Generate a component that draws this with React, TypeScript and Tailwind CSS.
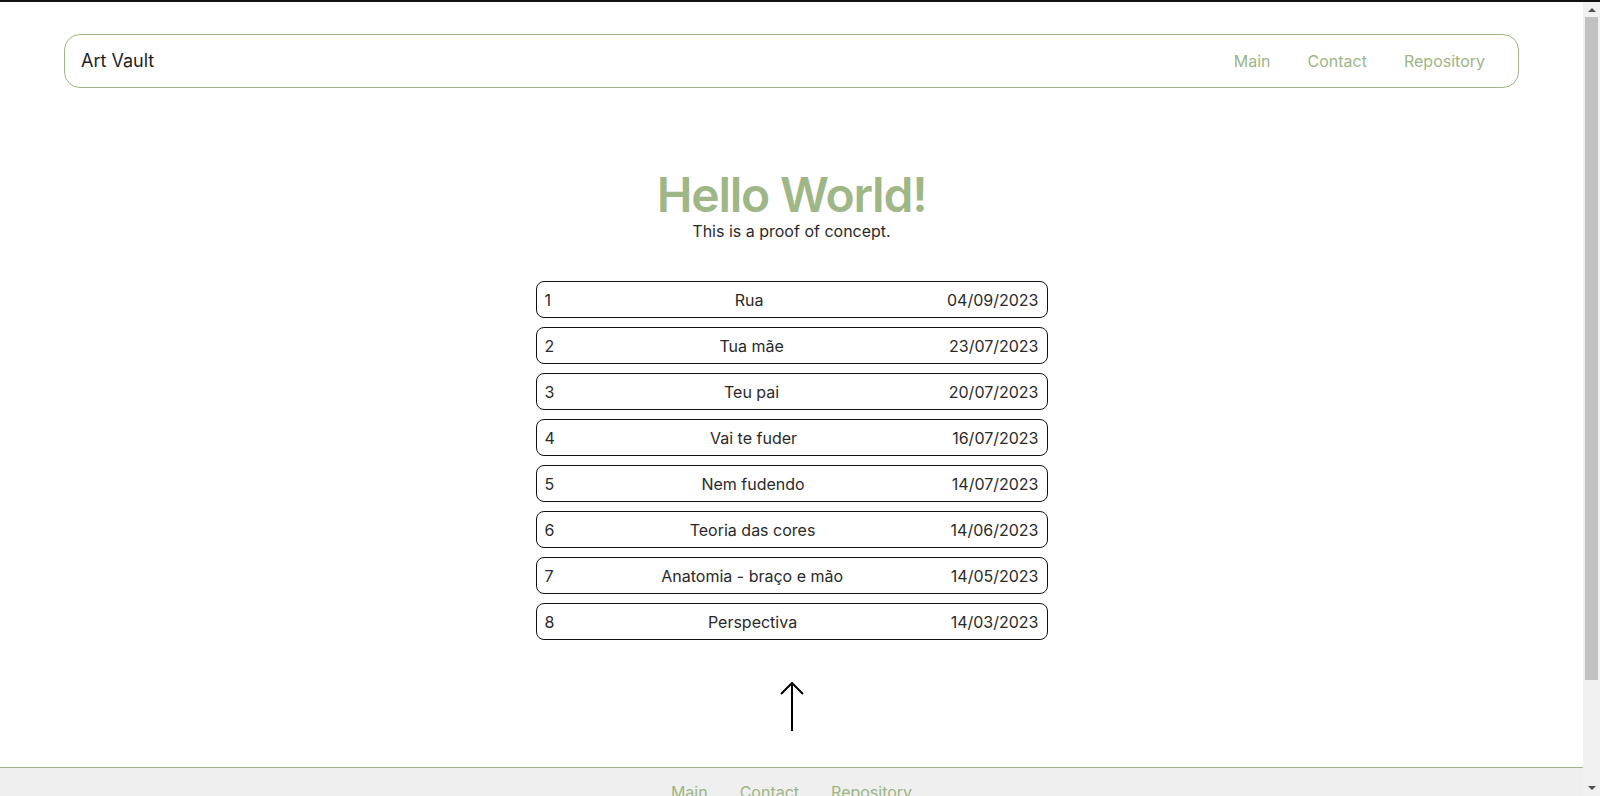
const ENTRIES = [
  { id: 1, title: "Rua", date: "04/09/2023" },
  { id: 2, title: "Tua mãe", date: "23/07/2023" },
  { id: 3, title: "Teu pai", date: "20/07/2023" },
  { id: 4, title: "Vai te fuder", date: "16/07/2023" },
  { id: 5, title: "Nem fudendo", date: "14/07/2023" },
  { id: 6, title: "Teoria das cores", date: "14/06/2023" },
  { id: 7, title: "Anatomia - braço e mão", date: "14/05/2023" },
  { id: 8, title: "Perspectiva", date: "14/03/2023" },
];

const LINKS = ["Main", "Contact", "Repository"];

function Scrollbar() {
  // classic browser scrollbar drawn over the right edge
  return (
    <div className="fixed right-0 top-[2px] flex h-[794px] w-[17px] flex-col bg-[#f1f1f1]">
      <div className="flex h-[15px] items-center justify-center">
        <div className="h-0 w-0 border-x-[4px] border-b-[4px] border-x-transparent border-b-[#505050]" />
      </div>
      <div className="mx-[2px] h-[663px] bg-[#c1c1c1]" />
      <div className="flex-1" />
      <div className="flex h-[17px] items-center justify-center">
        <div className="h-0 w-0 border-x-[4px] border-t-[4px] border-x-transparent border-t-[#505050]" />
      </div>
    </div>
  );
}

export default function App() {
  return (
    <div className="min-h-screen bg-white font-['Inter','Noto_Sans',sans-serif] text-[#222]">
      <div className="h-[2px] bg-[#111]" />

      <div className="mr-[17px]">
        {/* Header */}
        <header className="mx-16 mt-8 flex h-[54px] items-center justify-between rounded-2xl border border-[#9db585] pl-4 pr-[33px]">
          <span className="text-lg text-[#1f1f1f]">Art Vault</span>
          <nav className="flex gap-[37px]">
            {LINKS.map((l) => (
              <a key={l} href="#" className="text-base text-[#9db585]">
                {l}
              </a>
            ))}
          </nav>
        </header>

        <main className="flex flex-col items-center pt-[83px]">
          <h1 className="text-5xl font-semibold leading-none tracking-tight text-[#9fb787]">
            Hello World!
          </h1>
          <p className="text-base text-[#2a2a2a]">This is a proof of concept.</p>

          <ul className="mt-[38px] flex w-[512px] flex-col gap-[9px]">
            {ENTRIES.map((e) => (
              <li
                key={e.id}
                className="flex h-[37px] items-center justify-between rounded-lg border border-[#111] px-2 text-base text-[#2a2a2a]"
              >
                <span>{e.id}</span>
                <span>{e.title}</span>
                <span>{e.date}</span>
              </li>
            ))}
          </ul>

          <a href="#" className="mt-[42px] block" aria-label="Back to top">
            <svg width="26" height="50" viewBox="0 0 26 50" fill="none" stroke="#000" strokeWidth="2">
              <path d="M13 1 V49" />
              <path d="M2 12 L13 1 L24 12" />
            </svg>
          </a>
        </main>

        {/* Footer */}
        <footer className="mt-[35px] h-[148px] border-t border-[#9db585] bg-[#efefef] pt-3">
          <nav className="flex justify-center gap-8">
            {LINKS.map((l) => (
              <a key={l} href="#" className="text-base text-[#9db585]">
                {l}
              </a>
            ))}
          </nav>
        </footer>
      </div>

      <Scrollbar />
    </div>
  );
}
